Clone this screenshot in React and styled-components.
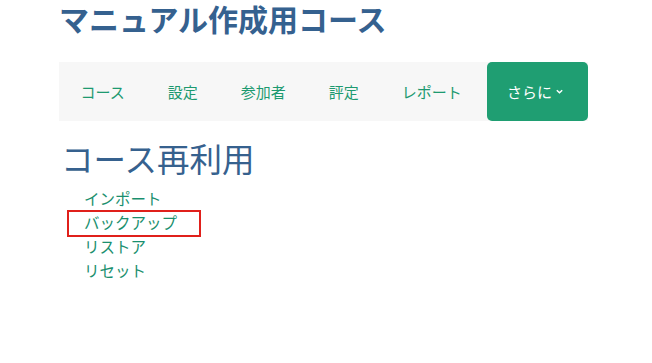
import React from "react";
import styled, { createGlobalStyle } from "styled-components";

const GlobalStyle = createGlobalStyle`
  body {
    margin: 0;
    background: #fff;
    font-family: "Noto Sans CJK JP", "Noto Sans", sans-serif;
  }
`;

const Page = styled.div`
  padding-left: 59px;
  width: 529px;
`;

const Title = styled.h1`
  margin: 0;
  font-size: 30px;
  line-height: 36px;
  font-weight: 700;
  color: #35618f;
  white-space: nowrap;
`;

const Nav = styled.nav`
  margin-top: 26px;
  display: flex;
  height: 59px;
  background: #f7f7f7;
`;

const NavItem = styled.a`
  display: flex;
  align-items: center;
  padding: 0 21.5px;
  font-size: 15px;
  color: #1d9a70;
  text-decoration: none;
`;

const MoreButton = styled.a`
  margin-left: auto;
  display: flex;
  align-items: center;
  gap: 3px;
  width: 101px;
  box-sizing: border-box;
  padding-left: 20px;
  font-size: 15px;
  color: #fff;
  background: #1f9e72;
  border-radius: 5px;
  text-decoration: none;
`;

const Heading = styled.h2`
  margin: 17px 0 0;
  font-size: 32.5px;
  line-height: 40px;
  font-weight: 400;
  color: #36618e;
  padding-left: 2px;
  white-space: nowrap;
`;

const LinkList = styled.ul`
  list-style: none;
  margin: 8px 0 0;
  padding: 0 0 0 25px;
`;

const LinkItem = styled.li`
  position: relative;
  font-size: 15.5px;
  line-height: 24px;
  color: #1a8f6e;

  ${(p) =>
    p.$marked &&
    `
    &::after {
      content: "";
      position: absolute;
      left: -17px;
      top: 0;
      width: 134px;
      height: 27px;
      box-sizing: border-box;
      border: 2px solid #e0201b;
    }
  `}
`;

const navItems = ["コース", "設定", "参加者", "評定", "レポート"];
const links = ["インポート", "バックアップ", "リストア", "リセット"];

export default function App() {
  return (
    <>
      <GlobalStyle />
      <Page>
        <Title>マニュアル作成用コース</Title>
        <Nav>
          {navItems.map((item) => (
            <NavItem key={item}>{item}</NavItem>
          ))}
          <MoreButton>
            さらに
            <svg width="9" height="9" viewBox="0 0 10 10">
              <path d="M2 3.5 L5 6.5 L8 3.5" fill="none" stroke="#fff" strokeWidth="1.6" />
            </svg>
          </MoreButton>
        </Nav>
        <Heading>コース再利用</Heading>
        <LinkList>
          {links.map((l) => (
            <LinkItem key={l} $marked={l === "バックアップ"}>
              {l}
            </LinkItem>
          ))}
        </LinkList>
      </Page>
    </>
  );
}
